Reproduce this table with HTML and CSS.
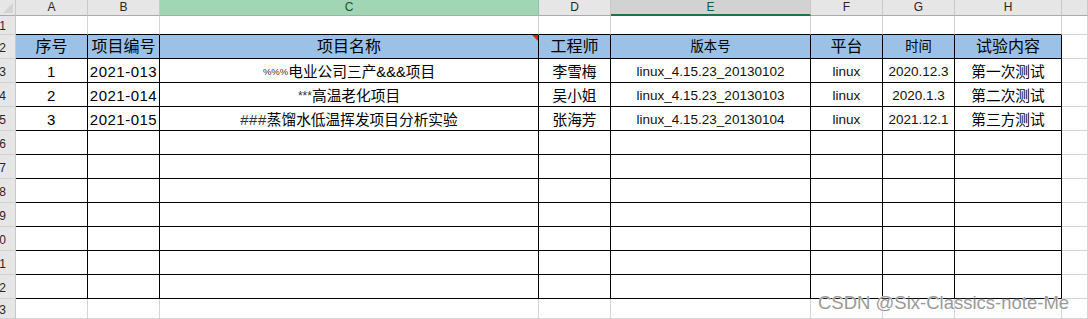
FILE: index.html
```html
<!DOCTYPE html>
<html lang="zh-CN">
<head>
<meta charset="utf-8">
<title>Sheet</title>
<link rel="stylesheet" href="styles.css">
</head>
<body>
<div class="sheet">
  <!-- column headers -->
  <div class="ch corner"></div>
  <div class="ch">A</div>
  <div class="ch">B</div>
  <div class="ch sel">C</div>
  <div class="ch">D</div>
  <div class="ch act">E</div>
  <div class="ch">F</div>
  <div class="ch">G</div>
  <div class="ch">H</div>
  <div class="ch"></div>

  <!-- row 1 -->
  <div class="rh">1</div>
  <div class="c tb"></div><div class="c tb"></div><div class="c tb"></div><div class="c tb"></div>
  <div class="c tb"></div><div class="c tb"></div><div class="c tb"></div><div class="c tb"></div>
  <div class="c"></div>

  <!-- row 2 -->
  <div class="rh">2</div>
  <div class="c t hd big">序号</div>
  <div class="c t hd big">项目编号</div>
  <div class="c t hd big note">项目名称</div>
  <div class="c t hd big">工程师</div>
  <div class="c t hd sm">版本号</div>
  <div class="c t hd big">平台</div>
  <div class="c t hd sm">时间</div>
  <div class="c t hd big">试验内容</div>
  <div class="c"></div>

  <!-- row 3 -->
  <div class="rh">3</div>
  <div class="c t d num">1</div>
  <div class="c t d num">2021-013</div>
  <div class="c t d"><span class="pct">%%%</span>电业公司三产&amp;&amp;&amp;项目</div>
  <div class="c t d">李雪梅</div>
  <div class="c t d lat">linux_4.15.23_20130102</div>
  <div class="c t d lat">linux</div>
  <div class="c t d lat">2020.12.3</div>
  <div class="c t d">第一次测试</div>
  <div class="c"></div>

  <!-- row 4 -->
  <div class="rh">4</div>
  <div class="c t d num">2</div>
  <div class="c t d num">2021-014</div>
  <div class="c t d"><span class="ast">***</span>高温老化项目</div>
  <div class="c t d">吴小姐</div>
  <div class="c t d lat">linux_4.15.23_20130103</div>
  <div class="c t d lat">linux</div>
  <div class="c t d lat">2020.1.3</div>
  <div class="c t d">第二次测试</div>
  <div class="c"></div>

  <!-- row 5 -->
  <div class="rh">5</div>
  <div class="c t d num">3</div>
  <div class="c t d num">2021-015</div>
  <div class="c t d"><span class="hash">###</span>蒸馏水低温挥发项目分析实验</div>
  <div class="c t d">张海芳</div>
  <div class="c t d lat">linux_4.15.23_20130104</div>
  <div class="c t d lat">linux</div>
  <div class="c t d lat">2021.12.1</div>
  <div class="c t d">第三方测试</div>
  <div class="c"></div>

  <!-- rows 6-12 -->
  <div class="rh">6</div>
  <div class="c t"></div><div class="c t"></div><div class="c t"></div><div class="c t"></div><div class="c t"></div><div class="c t"></div><div class="c t"></div><div class="c t"></div><div class="c"></div>
  <div class="rh">7</div>
  <div class="c t"></div><div class="c t"></div><div class="c t"></div><div class="c t"></div><div class="c t"></div><div class="c t"></div><div class="c t"></div><div class="c t"></div><div class="c"></div>
  <div class="rh">8</div>
  <div class="c t"></div><div class="c t"></div><div class="c t"></div><div class="c t"></div><div class="c t"></div><div class="c t"></div><div class="c t"></div><div class="c t"></div><div class="c"></div>
  <div class="rh">9</div>
  <div class="c t"></div><div class="c t"></div><div class="c t"></div><div class="c t"></div><div class="c t"></div><div class="c t"></div><div class="c t"></div><div class="c t"></div><div class="c"></div>
  <div class="rh">10</div>
  <div class="c t"></div><div class="c t"></div><div class="c t"></div><div class="c t"></div><div class="c t"></div><div class="c t"></div><div class="c t"></div><div class="c t"></div><div class="c"></div>
  <div class="rh">11</div>
  <div class="c t"></div><div class="c t"></div><div class="c t"></div><div class="c t"></div><div class="c t"></div><div class="c t"></div><div class="c t"></div><div class="c t"></div><div class="c"></div>
  <div class="rh">12</div>
  <div class="c t"></div><div class="c t"></div><div class="c t"></div><div class="c t"></div><div class="c t"></div><div class="c t"></div><div class="c t"></div><div class="c t"></div><div class="c"></div>

  <!-- row 13 -->
  <div class="rh">13</div>
  <div class="c"></div><div class="c"></div><div class="c"></div><div class="c"></div><div class="c"></div><div class="c"></div><div class="c"></div><div class="c"></div><div class="c"></div>
</div>
<div class="watermark">CSDN @Six-Classics-note-Me</div>
</body>
</html>
```

FILE: styles.css
```css
html, body {
  margin: 0;
  padding: 0;
  background: #ffffff;
  overflow: hidden;
}

body {
  position: relative;
  width: 1088px;
  height: 319px;
  font-family: "Liberation Sans", "Noto Sans CJK SC", sans-serif;
  color: #000;
}

.sheet {
  display: grid;
  grid-template-columns: 16px 72px 72px 379px 72px 200px 72px 72px 107px 26px;
  grid-template-rows: 16px 19px repeat(11, 24px) 20px;
}

.sheet > div {
  box-sizing: border-box;
  min-width: 0;
  overflow: hidden;
  white-space: nowrap;
}

/* column headers */
.ch {
  background: #e6e6e6;
  border-right: 1px solid #c8c8c8;
  border-bottom: 1px solid #ababab;
  display: flex;
  align-items: center;
  justify-content: center;
  font-size: 12px;
  color: #262626;
  line-height: 15px;
}

.ch.corner {
  position: relative;
  background: #e6e6e6;
}

.ch.corner::after {
  content: "";
  position: absolute;
  right: 2px;
  bottom: 2px;
  width: 0;
  height: 0;
  border-left: 10px solid transparent;
  border-bottom: 10px solid #d4d4d4;
}

.ch.sel {
  background: #a0d6b4;
  color: #1b4f31;
  border-right-color: #8fc3a2;
}

.ch.act {
  background: #d2d2d2;
  color: #185c37;
  border-bottom: 2px solid #217346;
}

/* row headers */
.rh {
  background: #e6e6e6;
  border-right: 1px solid #c8c8c8;
  border-bottom: 1px solid #d0d0d0;
  display: flex;
  align-items: center;
  justify-content: flex-end;
  padding-right: 9px;
  padding-top: 2px;
  font-size: 12px;
  color: #262626;
}

/* cells */
.c {
  border-right: 1px solid #d4d4d4;
  border-bottom: 1px solid #d4d4d4;
  display: flex;
  justify-content: center;
  align-items: center;
}

.c.tb {
  border-bottom-color: #000;
}

.c.t {
  border-right-color: #000;
  border-bottom-color: #000;
}

.c.hd {
  background: #9bc2e6;
}

.c.hd.big {
  font-size: 16px;
  line-height: 20px;
}

.c.hd.sm {
  font-size: 13.3px;
  line-height: 18px;
}

.c.note {
  position: relative;
}

.c.note::after {
  content: "";
  position: absolute;
  top: 0;
  right: 0;
  width: 0;
  height: 0;
  border-left: 6px solid transparent;
  border-top: 6px solid #e0201b;
}

.c.d {
  align-items: flex-end;
  font-size: 14.7px;
  line-height: 18px;
  padding-bottom: 1px;
}

.c.d.num {
  font-size: 15px;
  letter-spacing: 0.5px;
}

.c.d.lat {
  font-size: 13.5px;
  color: #111;
}

.pct {
  font-size: 9.5px;
  color: #333;
}

.ast {
  font-size: 12px;
  color: #333;
}

.hash {
  font-size: 15px;
  letter-spacing: 0.5px;
  color: #333;
}

/* watermark overlay */
.watermark {
  position: absolute;
  left: 818px;
  top: 292px;
  font-size: 18.5px;
  line-height: 22px;
  color: #9a9a9a;
  text-shadow: 0 0 1px #ffffff, 0 0 1px #ffffff;
  white-space: nowrap;
}
```
